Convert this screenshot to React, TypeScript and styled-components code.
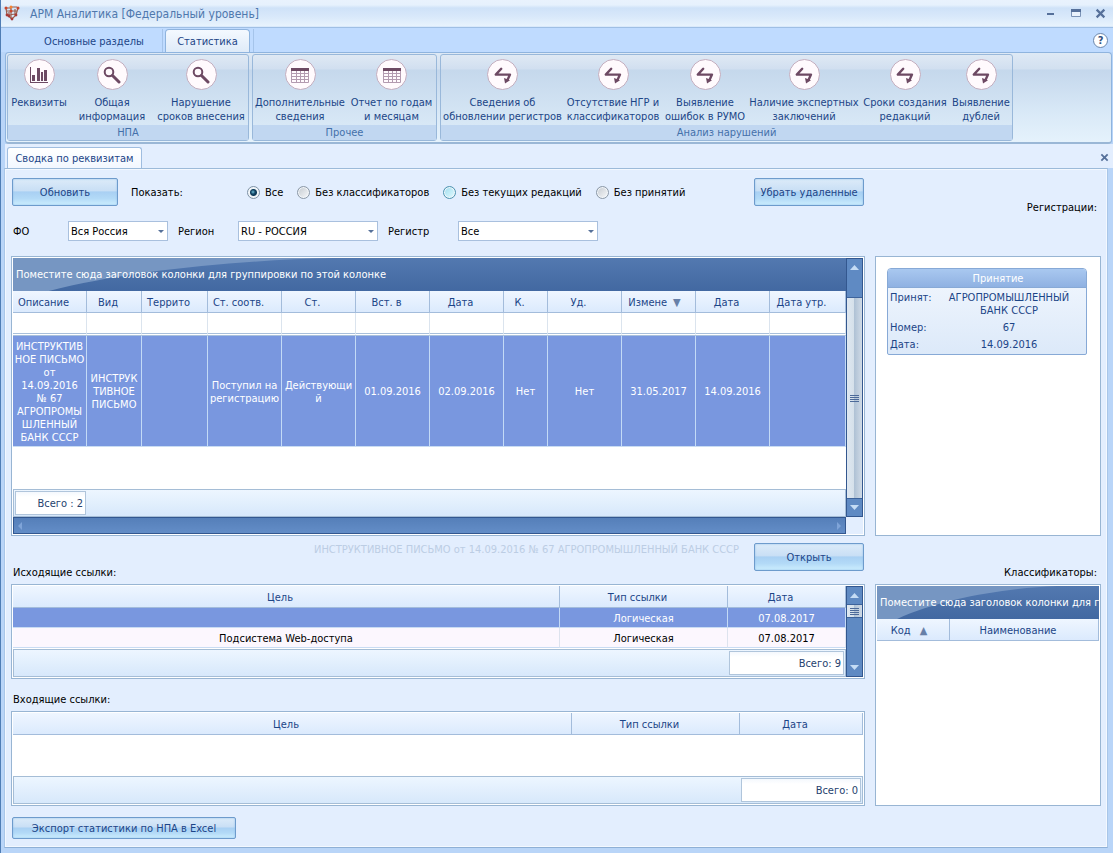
import React, { useState } from "react";
import styled, { createGlobalStyle, css } from "styled-components";

const c = {
  text: "#1c4587",
  page: "#e3eefe",
  select: "#7997df",
  plum: "#6d4963",
};

const Global = createGlobalStyle`
  * { box-sizing: border-box; }
  body { margin: 0; background: ${c.page}; }
  body, button, select, input, table {
    font-family: "DejaVu Sans Condensed", Tahoma, "Noto Sans", sans-serif;
    font-size: 11px;
    line-height: 13px;
  }
`;

const Window = styled.div`
  min-height: 100vh;
  display: flex;
  flex-direction: column;
  border-left: 1px solid #4f7db5;
  background: #b9d5f8;
`;

/* ---------- title bar ---------- */
const TitleBar = styled.header`
  height: 27px;
  display: flex;
  align-items: center;
  padding: 0 0 0 3px;
  background: linear-gradient(#e9f2fd 0, #e6f1fd 5px, #cfe2f8 8px, #d8e8fa 16px, #e9f4fd 27px);
  border-bottom: 1px solid #d9e9fb;
`;
const Title = styled.h1`
  margin: 0 auto 0 10px;
  padding-top: 1px;
  font-size: 12px;
  line-height: 16px;
  font-weight: 400;
  color: #4f78ad;
`;
const WinButton = styled.button`
  width: 25px;
  height: 20px;
  padding: 0;
  border: 0;
  background: none;
  display: flex;
  align-items: center;
  justify-content: center;
`;

/* ---------- ribbon ---------- */
const TabStrip = styled.nav`
  height: 25px;
  display: flex;
  align-items: flex-end;
  padding: 0 5px 0 25px;
  border-top: 1px solid #9fbfe4;
  background: #bfdbff;
`;
const RibbonTab = styled.button<{ $active?: boolean }>`
  height: 23px;
  padding: 1px 0 0;
  width: ${(p) => (p.$active ? 85 : 137)}px;
  border: 0;
  border-right: 1px solid #a5c4ea;
  color: ${c.text};
  background: none;
  ${(p) =>
    p.$active &&
    css`
      margin-left: 2px;
      padding: 0;
      border: 1px solid #8fb4de;
      border-bottom: 0;
      border-radius: 4px 4px 0 0;
      background: linear-gradient(#f4f9ff, #dfebf8);
    `}
`;
const TabDivider = styled.span`
  width: 4px;
  height: 23px;
  border-right: 1px solid #a5c4ea;
`;
const HelpButton = styled.button`
  width: 15px;
  height: 15px;
  margin: 0 0 4px auto;
  padding: 0;
  border: 1px solid #6a86ab;
  border-radius: 50%;
  background: #fff;
  color: #33527e;
  font-weight: 700;
`;
const Ribbon = styled.section`
  height: 92px;
  display: flex;
  gap: 3px;
  margin: 0 1px 0 4px;
  padding: 1px 1px 0;
  border: 1px solid #8fb4de;
  border-bottom: 2px solid #9ab7d6;
  border-radius: 4px;
  background: linear-gradient(#dee9f5 0, #d2e0f0 16px, #c4d7ec 17px, #d9e9f7 60px, #e5f2fc 100%);
`;
const Group = styled.div`
  height: 87px;
  display: flex;
  flex-direction: column;
  border: 1px solid #99b8da;
  border-radius: 3px;
  background: linear-gradient(#dfe9f4 0, #d1dff0 14px, #c5d8ec 15px, #d8e8f6 70px);
`;
const GroupItems = styled.div`
  flex: 1;
  display: flex;
`;
const GroupCaption = styled.div`
  height: 15px;
  padding-top: 1px;
  text-align: center;
  color: #4470aa;
  background: #c1d7f1;
`;
const RibbonButton = styled.button<{ $w: number }>`
  width: ${(p) => p.$w}px;
  padding: 4px 0 0;
  border: 0;
  background: none;
  display: flex;
  flex-direction: column;
  align-items: center;
  gap: 6px;
  color: ${c.text};
  line-height: 14px;
  white-space: pre;
`;
const Disc = styled.span`
  width: 31px;
  height: 31px;
  border: 1px solid #c3aebf;
  border-radius: 50%;
  background: #fffafd;
  display: flex;
  align-items: center;
  justify-content: center;
`;

/* ---------- document area ---------- */
const DocTabs = styled.div`
  height: 24px;
  display: flex;
  align-items: flex-end;
  justify-content: space-between;
  margin: 0 0 0 4px;
  padding: 0 4px 0 2px;
  background: ${c.page};
`;
const DocTab = styled.button`
  height: 21px;
  width: 135px;
  padding: 0;
  border: 1px solid #9fbde0;
  border-bottom: 0;
  border-radius: 3px 3px 0 0;
  background: linear-gradient(#fff, #f2f7ff);
  color: ${c.text};
`;
const CloseTab = styled.button`
  width: 9px;
  height: 9px;
  margin-bottom: 6px;
  padding: 0;
  border: 0;
  background: none;
  display: flex;
`;
const Page = styled.main`
  flex: 1;
  display: grid;
  grid-template-columns: minmax(0, 1fr) 226px;
  grid-template-rows: 87px 280px 48px 222px auto;
  column-gap: 10px;
  margin: 0 5px 6px 3px;
  padding: 0 6px 8px;
  border: 1px solid #a9c6e8;
  border-bottom-color: #8fb0d6;
  border-top-color: #9cbad9;
  background: ${c.page};
  box-shadow: inset 0 0 0 1px #f3f8ff;
`;
const Tools = styled.div`
  display: flex;
  flex-direction: column;
  gap: 15px;
  padding: 9px 1px 0;
`;
const ToolRow = styled.div`
  display: flex;
  align-items: center;
`;
const Push = styled.div`
  margin-left: auto;
`;
const Button = styled.button<{ $w: number; $h?: number }>`
  width: ${(p) => p.$w}px;
  height: ${(p) => p.$h ?? 28}px;
  padding: 0;
  border: 1px solid #6d9bcc;
  border-radius: 2px;
  color: ${c.text};
  background: linear-gradient(#dcebf9 0, #c9dff5 45%, #a9d0f3 50%, #b3daf7 75%, #cdeefe 100%);
  box-shadow: inset 0 0 2px #8fbbe8;
`;
const RadioSet = styled.fieldset`
  display: flex;
  gap: 14px;
  margin: 0;
  padding: 0;
  border: 0;
`;
const ShowLabel = styled.span`
  width: 116px;
  margin-left: 13px;
`;
const RadioLabel = styled.label`
  display: flex;
  align-items: center;
  gap: 5px;
  white-space: nowrap;
`;
const Radio = styled.input<{ $hot?: boolean }>`
  appearance: none;
  width: 13px;
  height: 13px;
  margin: 0;
  border: 1px solid ${(p) => (p.$hot ? "#4d93b0" : "#8b98a6")};
  border-radius: 50%;
  background: ${(p) =>
    p.$hot ? "linear-gradient(135deg, #9fdcee, #e3fbff)" : "linear-gradient(135deg, #c3c9d0, #f9fafb)"};
  box-shadow: inset 0 0 0 1px #f2f6fa;
  &:checked {
    border-color: #7d91a5;
    background: radial-gradient(circle at 5px 5px, #6fc0d8 0, #174a6b 2px, transparent 3px),
      radial-gradient(circle closest-side, #0d3a58 3px, #eef3f7 4px);
  }
`;
const FieldLabel = styled.label<{ $w: number }>`
  width: ${(p) => p.$w}px;
  padding-left: 1px;
`;
const SelectBox = styled.div<{ $w: number }>`
  position: relative;
  width: ${(p) => p.$w}px;
  margin-right: 9px;
  &::after {
    content: "";
    position: absolute;
    right: 4px;
    top: 9px;
    border: 3px solid transparent;
    border-top-color: #56719a;
    border-bottom: 0;
    pointer-events: none;
  }
`;
const Select = styled.select`
  appearance: none;
  display: block;
  width: 100%;
  height: 20px;
  padding: 0 14px 0 2px;
  border: 1px solid #a9c0de;
  border-radius: 0;
  background: #fff;
  color: #000;
`;

/* ---------- grids ---------- */
const Frame = styled.div<{ $h?: number }>`
  height: ${(p) => (p.$h ? p.$h + "px" : "auto")};
  min-width: 0;
  padding: 1px;
  border: 1px solid #98b5d3;
  background: #fff;
  display: flex;
`;
const FrameBody = styled.div`
  flex: 1;
  min-width: 0;
  display: flex;
  flex-direction: column;
`;
const GroupPanel = styled.div`
  position: relative;
  height: 33px;
  padding: 10px 0 0 3px;
  overflow: hidden;
  white-space: nowrap;
  color: #fff;
  background: linear-gradient(#5379b0, #4268a1);
`;
const Sheen = styled.svg`
  position: absolute;
  left: 0;
  top: 0;
`;
const PanelText = styled.div`
  position: relative;
`;
const Table = styled.table`
  width: 100%;
  table-layout: fixed;
  border-collapse: separate;
  border-spacing: 0;
`;
const Th = styled.th`
  height: 22px;
  padding: 1px 0 0;
  font-weight: 400;
  color: ${c.text};
  white-space: nowrap;
  border-right: 1px solid #a3bcdb;
  border-bottom: 1px solid #a3bcdb;
  background: linear-gradient(#eff6ff, #dbeafd);
`;
const FilterCell = styled.td`
  height: 23px;
  padding: 0;
  border-right: 1px solid #dbe4ee;
  border-bottom: 3px double #a9c0db;
`;
const FilterInput = styled.input`
  display: block;
  width: 100%;
  height: 18px;
  padding: 0 2px;
  border: 0;
  background: none;
  outline: none;
`;
const Td = styled.td<{ $on?: boolean; $h: number }>`
  height: ${(p) => p.$h}px;
  padding: 1px 0 0;
  text-align: center;
  white-space: pre;
  color: ${(p) => (p.$on ? "#fff" : "#000")};
  background: ${(p) => (p.$on ? c.select : "#fcf7fe")};
  border-right: 1px solid ${(p) => (p.$on ? "#c3daf6" : "#dde3ee")};
  border-bottom: 1px solid #c9dcf3;
`;
const GridFooter = styled.div<{ $right?: boolean }>`
  height: 28px;
  margin-top: auto;
  padding: 1px;
  display: flex;
  justify-content: ${(p) => (p.$right ? "flex-end" : "flex-start")};
  border: 1px solid #a5bdd6;
  background: linear-gradient(#edf6ff, #d7e8fb);
`;
const Total = styled.output<{ $w: number }>`
  width: ${(p) => p.$w}px;
  height: 24px;
  padding: 5px 2px 0 0;
  border: 1px solid #b0c5db;
  background: linear-gradient(#f4f8fd, #fff 5px);
  color: #26426e;
  text-align: right;
`;
const VScroll = styled.div`
  width: 17px;
  display: flex;
  flex-direction: column;
  border: 1px solid #33578f;
  background: #5f8ac3;
`;
const ScrollArrow = styled.button`
  height: 17px;
  padding: 0;
  border: 0;
  background: #5f8ac3;
  display: flex;
  align-items: center;
  justify-content: center;
`;
const Gap = styled.div<{ $h: number }>`
  height: ${(p) => p.$h}px;
`;
const Thumb = styled.div<{ $h?: number }>`
  ${(p) => (p.$h ? `height: ${p.$h}px;` : "flex: 1;")}
  display: flex;
  align-items: center;
  justify-content: center;
  border: solid #3d639b;
  border-width: 1px 0;
  background: linear-gradient(90deg, #dfe8f1, #d5e0ea 45%, #b0c2d5 50%, #cfdae6);
`;
const TrackRest = styled.div`
  flex: 1;
`;
const HScroll = styled.div`
  height: 17px;
  display: flex;
  justify-content: space-between;
  align-items: center;
  padding: 0 4px;
  border: 1px solid #33578f;
  background: linear-gradient(#557fb9, #638dc7);
`;
const ScrollColumn = styled.div`
  display: flex;
  flex-direction: column;
  padding-bottom: 17px;
  background: ${c.page};
  ${VScroll} { flex: 1; }
`;

/* ---------- side cards & labels ---------- */
const SideLabel = styled.div<{ $top: number }>`
  padding: ${(p) => p.$top}px 4px 0 0;
  text-align: right;
  color: #000;
`;
const SidePanel = styled.div`
  padding: 11px 13px 0 11px;
  border: 1px solid #98b5d3;
  background: #fff;
`;
const Card = styled.section`
  border: 1px solid #87a9d6;
  border-radius: 4px 4px 2px 2px;
  background: linear-gradient(#f2f7fe, #dce9f9);
  color: ${c.text};
`;
const CardTitle = styled.h2`
  height: 19px;
  margin: 0;
  padding: 3px 0 0 22px;
  border-bottom: 1px solid #87a9d6;
  border-radius: 3px 3px 0 0;
  font-size: 11px;
  line-height: 13px;
  font-weight: 400;
  text-align: center;
  color: #fff;
  background: linear-gradient(#a9c8f0, #8fb1e2);
`;
const Facts = styled.dl`
  display: grid;
  grid-template-columns: 42px 1fr;
  row-gap: 4px;
  margin: 0;
  padding: 3px 0 3px 2px;
`;
const Dt = styled.dt``;
const Dd = styled.dd`
  margin: 0;
  text-align: center;
  white-space: pre;
`;
const OpenRow = styled.div`
  display: grid;
  grid-template-columns: 1fr auto;
  column-gap: 15px;
  padding: 7px 1px 0;
`;
const DocCaption = styled.div`
  text-align: right;
  color: #bccde4;
`;
const OutLabel = styled.div`
  padding: 10px 0 0 1px;
`;
const LinkColumn = styled.div`
  min-width: 0;
  display: flex;
  flex-direction: column;
`;
const InLabel = styled.div`
  height: 32px;
  padding: 14px 0 0 2px;
`;
const ExportRow = styled.div`
  padding: 11px 1px 0;
`;
const Sort = styled.span`
  margin: 0 8px 0 6px;
  color: #6780a8;
`;
const SortRoom = styled.span`
  display: inline-block;
  width: 12px;
`;

/* ---------- drawings ---------- */
const ChartIcon = () => (
  <svg width="18" height="18" viewBox="0 0 18 18" fill={c.plum} aria-hidden="true">
    <path d="M0 1h1v15h17v1H0z" />
    <rect x="2" y="9" width="3" height="6" />
    <rect x="7" y="2" width="3" height="13" />
    <rect x="11" y="6" width="2" height="9" />
    <rect x="14" y="4" width="3" height="11" />
  </svg>
);
const LensIcon = () => (
  <svg width="18" height="18" viewBox="0 0 18 18" fill="none" stroke={c.plum} aria-hidden="true">
    <circle cx="6" cy="6" r="4.3" strokeWidth="2" />
    <path d="M9.5 9.5L16 16" strokeWidth="3" strokeLinecap="round" />
  </svg>
);
const TableIcon = () => (
  <svg width="18" height="16" viewBox="0 0 18 16" aria-hidden="true">
    <rect x="0" y="1" width="18" height="3" fill={c.plum} />
    <path
      d="M.5 4v11.500h17V4M.5 6.500h17M.5 9.500h17M.5 12.500h17M5.500 4v11.500M9.500 4v11.500M13.500 4v11.500"
      fill="none"
      stroke="#b39bb0"
    />
  </svg>
);
const SwapIcon = () => (
  <svg width="18" height="18" viewBox="0 0 18 18" aria-hidden="true">
    <path d="M7.200 2.800L1.800 8.600H16L13.600 13.800" fill="none" stroke={c.plum} strokeWidth="2.400" strokeLinejoin="round" strokeLinecap="round" />
    <path d="M10 12L16 14.200L11 17.400z" fill={c.plum} />
  </svg>
);
const AppIcon = () => (
  <svg width="16" height="16" viewBox="0 0 16 16" aria-hidden="true">
    <path d="M2 3h4l2-1h5M2 3l1 7 5 4 4-4 2-7M7 2v12M3 6h10M3 10l9-1M5 7v4M11 4v7" fill="none" stroke="#9a5f4c" strokeWidth="1.200" />
    {[[2, 3], [7, 2], [14, 3], [7, 6]].map(([x, y]) => (
      <circle key={`${x}-${y}`} cx={x} cy={y} r="1.500" fill={y === 2 ? "#f58433" : "#c9452c"} />
    ))}
    {[[3, 10], [12, 10], [8, 14], [5, 11]].map(([x, y]) => (
      <circle key={`${x}-${y}`} cx={x} cy={y} r="1.400" fill="#a83a36" />
    ))}
  </svg>
);
const Cross = ({ size, w }: { size: number; w: number }) => (
  <svg width={size} height={size} viewBox="0 0 10 10" aria-hidden="true">
    <path d="M1.500 1.500l7 7M8.500 1.500l-7 7" stroke="#56709a" strokeWidth={w} />
  </svg>
);
const Arrow = ({ down }: { down?: boolean }) => (
  <svg width="9" height="5" viewBox="0 0 9 5" aria-hidden="true">
    <path d={down ? "M0 0h9L4.500 5z" : "M0 5h9L4.500 0z"} fill="#c5dcf5" />
  </svg>
);
const Grip = () => (
  <svg width="9" height="9" viewBox="0 0 9 9" aria-hidden="true">
    <path d="M0 1.500h9M0 3.500h9M0 5.500h9M0 7.500h9" stroke="#4c6a99" />
  </svg>
);
const SideArrow = ({ right }: { right?: boolean }) => (
  <svg width="5" height="8" viewBox="0 0 5 8" aria-hidden="true">
    <path d={right ? "M1 0v8l4-4z" : "M4 0v8L0 4z"} fill="#7fa4d8" />
  </svg>
);

const icons = { chart: ChartIcon, lens: LensIcon, table: TableIcon, swap: SwapIcon };
type Item = [keyof typeof icons, string, number];
const groups: { title: string; items: Item[] }[] = [
  {
    title: "НПА",
    items: [
      ["chart", "Реквизиты", 62],
      ["lens", "Общая\nинформация", 84],
      ["lens", "Нарушение\nсроков внесения", 94],
    ],
  },
  {
    title: "Прочее",
    items: [
      ["table", "Дополнительные\nсведения", 94],
      ["table", "Отчет по годам\nи месяцам", 89],
    ],
  },
  {
    title: "Анализ нарушений",
    items: [
      ["swap", "Сведения об\nобновлении регистров", 123],
      ["swap", "Отсутствие НГР и\nклассификаторов", 98],
      ["swap", "Выявление\nошибок в РУМО", 86],
      ["swap", "Наличие экспертных\nзаключений", 112],
      ["swap", "Сроки создания\nредакций", 90],
      ["swap", "Выявление\nдублей", 62],
    ],
  },
];

const columns: [string, number, string][] = [
  ["Описание", 74, "ИНСТРУКТИВ\nНОЕ ПИСЬМО\nот\n14.09.2016\n№ 67\nАГРОПРОМЫ\nШЛЕННЫЙ\nБАНК СССР"],
  ["Вид", 55, "ИНСТРУК\nТИВНОЕ\nПИСЬМО"],
  ["Террито", 66, ""],
  ["Ст. соотв.", 74, "Поступил на\nрегистрацию"],
  ["Ст.", 74, "Действующи\nй"],
  ["Вст. в", 74, "01.09.2016"],
  ["Дата", 74, "02.09.2016"],
  ["К.", 44, "Нет"],
  ["Уд.", 74, "Нет"],
  ["Измене", 74, "31.05.2017"],
  ["Дата", 74, "14.09.2016"],
  ["Дата утр.", 76, ""],
];

const filters: [string, string, number, number][] = [
  ["ФО", "Вся Россия", 56, 100],
  ["Регион", "RU - РОССИЯ", 61, 140],
  ["Регистр", "Все", 71, 140],
];

const hint = "Поместите сюда заголовок колонки для группировки по этой колонке";

const DropPanel = ({ reach, text }: { reach: number; text: string }) => (
  <GroupPanel>
    <Sheen width={reach} height="33" viewBox="0 0 330 33" preserveAspectRatio="none" aria-hidden="true">
      <path d="M0 0H330C240 2 120 12 37 33H0z" fill="#7696c2" />
    </Sheen>
    <PanelText>{text}</PanelText>
  </GroupPanel>
);

const LinkTable = ({ widths, rows }: { widths: number[]; rows: string[][] }) => (
  <Table>
    <colgroup>
      <col />
      <col style={{ width: widths[0] }} />
      <col style={{ width: widths[1] }} />
    </colgroup>
    <thead>
      <tr>
        <Th scope="col">Цель<SortRoom /></Th>
        <Th scope="col">Тип ссылки<SortRoom /></Th>
        <Th scope="col">Дата<SortRoom /></Th>
      </tr>
    </thead>
    <tbody>
      {rows.map((r, i) => (
        <tr key={i}>
          {r.map((v, j) => (
            <Td key={j} $h={20} $on={i === 0}>{v}</Td>
          ))}
        </tr>
      ))}
    </tbody>
  </Table>
);

export default function App() {
  const [show, setShow] = useState("Все");
  return (
    <>
      <Global />
      <Window>
        <TitleBar>
          <AppIcon />
          <Title>АРМ Аналитика [Федеральный уровень]</Title>
          <WinButton aria-label="Свернуть">
            <svg width="10" height="10" viewBox="0 0 10 10" aria-hidden="true"><path d="M1 6h7" stroke="#56709a" strokeWidth="2" /></svg>
          </WinButton>
          <WinButton aria-label="Развернуть">
            <svg width="10" height="8" viewBox="0 0 10 8" aria-hidden="true">
              <path d="M.5.5h9v7h-9z" fill="#eaf2fc" stroke="#7b93b6" />
              <path d="M0 1.500h10" stroke="#56709a" strokeWidth="3" />
            </svg>
          </WinButton>
          <WinButton aria-label="Закрыть"><Cross size={11} w={2} /></WinButton>
        </TitleBar>

        <TabStrip>
          <RibbonTab>Основные разделы</RibbonTab>
          <RibbonTab $active>Статистика</RibbonTab>
          <TabDivider />
          <HelpButton aria-label="Справка">?</HelpButton>
        </TabStrip>
        <Ribbon>
          {groups.map((g) => (
            <Group key={g.title}>
              <GroupItems>
                {g.items.map(([icon, label, w]) => {
                  const Icon = icons[icon];
                  return (
                    <RibbonButton key={label} $w={w}>
                      <Disc><Icon /></Disc>
                      {label}
                    </RibbonButton>
                  );
                })}
              </GroupItems>
              <GroupCaption>{g.title}</GroupCaption>
            </Group>
          ))}
        </Ribbon>

        <DocTabs>
          <DocTab>Сводка по реквизитам</DocTab>
          <CloseTab aria-label="Закрыть вкладку"><Cross size={9} w={2} /></CloseTab>
        </DocTabs>

        <Page>
          <Tools>
            <ToolRow>
              <Button $w={106}>Обновить</Button>
              <ShowLabel>Показать:</ShowLabel>
              <RadioSet>
                {["Все", "Без классификаторов", "Без текущих редакций", "Без принятий"].map((o, i) => (
                  <RadioLabel key={o}>
                    <Radio type="radio" name="show" $hot={i === 2} checked={show === o} onChange={() => setShow(o)} />
                    {o}
                  </RadioLabel>
                ))}
              </RadioSet>
              <Push><Button $w={110}>Убрать удаленные</Button></Push>
            </ToolRow>
            <ToolRow>
              {filters.map(([label, value, lw, w]) => (
                <React.Fragment key={label}>
                  <FieldLabel htmlFor={label} $w={lw}>{label}</FieldLabel>
                  <SelectBox $w={w}>
                    <Select id={label}><option>{value}</option></Select>
                  </SelectBox>
                </React.Fragment>
              ))}
            </ToolRow>
          </Tools>
          <SideLabel $top={32}>Регистрации:</SideLabel>

          <Frame>
            <FrameBody>
              <DropPanel reach={320} text={hint} />
              <Table>
                <colgroup>
                  {columns.map(([, w], i) => <col key={i} style={{ width: w }} />)}
                </colgroup>
                <thead>
                  <tr>
                    {columns.map(([name], i) => (
                      <Th key={i} scope="col">
                        {name}
                        {name === "Измене" ? <Sort>▼</Sort> : <SortRoom />}
                      </Th>
                    ))}
                  </tr>
                </thead>
                <tbody>
                  <tr>
                    {columns.map(([name], i) => (
                      <FilterCell key={i}><FilterInput aria-label={`Фильтр: ${name}`} /></FilterCell>
                    ))}
                  </tr>
                  <tr>
                    {columns.map(([, , v], i) => <Td key={i} $on $h={111}>{v}</Td>)}
                  </tr>
                </tbody>
              </Table>
              <GridFooter><Total $w={71}>Всего : 2</Total></GridFooter>
              <HScroll><SideArrow /><SideArrow right /></HScroll>
            </FrameBody>
            <ScrollColumn>
              <VScroll>
                <ScrollArrow aria-label="Вверх"><Arrow /></ScrollArrow>
                <Gap $h={21} />
                <Thumb><Grip /></Thumb>
                <ScrollArrow aria-label="Вниз"><Arrow down /></ScrollArrow>
              </VScroll>
            </ScrollColumn>
          </Frame>
          <SidePanel>
            <Card>
              <CardTitle>Принятие</CardTitle>
              <Facts>
                <Dt>Принят:</Dt>
                <Dd>{"АГРОПРОМЫШЛЕННЫЙ\nБАНК СССР"}</Dd>
                <Dt>Номер:</Dt>
                <Dd>67</Dd>
                <Dt>Дата:</Dt>
                <Dd>14.09.2016</Dd>
              </Facts>
            </Card>
          </SidePanel>

          <OpenRow>
            <div>
              <DocCaption>ИНСТРУКТИВНОЕ ПИСЬМО от 14.09.2016 № 67 АГРОПРОМЫШЛЕННЫЙ БАНК СССР</DocCaption>
              <OutLabel>Исходящие ссылки:</OutLabel>
            </div>
            <Button $w={110}>Открыть</Button>
          </OpenRow>
          <SideLabel $top={30}>Классификаторы:</SideLabel>

          <LinkColumn>
            <Frame $h={95}>
              <FrameBody>
                <LinkTable
                  widths={[168, 118]}
                  rows={[["", "Логическая", "07.08.2017"], ["Подсистема Web-доступа", "Логическая", "07.08.2017"]]}
                />
                <GridFooter $right><Total $w={115}>Всего: 9</Total></GridFooter>
              </FrameBody>
              <VScroll>
                <ScrollArrow aria-label="Вверх"><Arrow /></ScrollArrow>
                <Thumb $h={14}><Grip /></Thumb>
                <TrackRest />
                <ScrollArrow aria-label="Вниз"><Arrow down /></ScrollArrow>
              </VScroll>
            </Frame>
            <InLabel>Входящие ссылки:</InLabel>
            <Frame $h={95}>
              <FrameBody>
                <LinkTable widths={[168, 123]} rows={[]} />
                <GridFooter $right><Total $w={120}>Всего: 0</Total></GridFooter>
              </FrameBody>
            </Frame>
          </LinkColumn>
          <Frame>
            <FrameBody>
              <DropPanel reach={180} text="Поместите сюда заголовок колонки для г" />
              <Table>
                <colgroup>
                  <col style={{ width: 73 }} />
                  <col />
                </colgroup>
                <thead>
                  <tr>
                    <Th scope="col">Код <Sort>▲</Sort></Th>
                    <Th scope="col">Наименование<SortRoom /></Th>
                  </tr>
                </thead>
              </Table>
            </FrameBody>
          </Frame>

          <ExportRow><Button $w={224} $h={22}>Экспорт статистики по НПА в Excel</Button></ExportRow>
        </Page>
      </Window>
    </>
  );
}
